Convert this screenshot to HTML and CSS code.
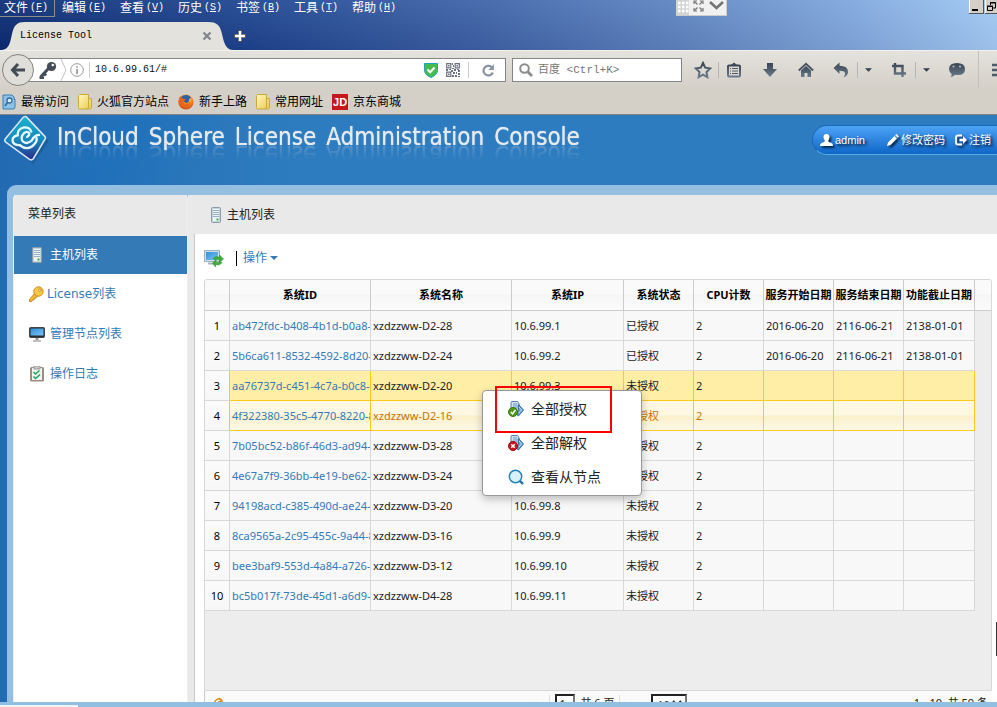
FILE: index.html
```html
<!DOCTYPE html>
<html lang="zh-CN">
<head>
<meta charset="utf-8">
<title>License Tool</title>
<link rel="stylesheet" href="styles.css">
</head>
<body>
<svg class="defs" aria-hidden="true">
  <defs>
    <linearGradient id="g-tool" x1="0" y1="0" x2="0" y2="1"><stop offset="0" stop-color="#3a4652"/><stop offset="1" stop-color="#6a7b8c"/></linearGradient>
    <linearGradient id="g-folder" x1="0" y1="0" x2="1" y2="1"><stop offset="0" stop-color="#fff8c0"/><stop offset="1" stop-color="#eac94a"/></linearGradient>
    <linearGradient id="g-screen" x1="0" y1="0" x2="1" y2="1"><stop offset="0" stop-color="#2f8fd8"/><stop offset="1" stop-color="#7cc4f2"/></linearGradient>
    <linearGradient id="g-logo" x1="0" y1="0" x2="0" y2="1"><stop offset="0" stop-color="#19b4cf"/><stop offset=".55" stop-color="#1686bd"/><stop offset="1" stop-color="#2a2a8c"/></linearGradient>
    <radialGradient id="g-fox" cx=".6" cy=".3" r=".8"><stop offset="0" stop-color="#ffd24a"/><stop offset=".5" stop-color="#f07a1c"/><stop offset="1" stop-color="#c63a10"/></radialGradient>
    <symbol id="folder" viewBox="0 0 14 16"><path d="M1.500.5h9v4h3V13q0 2-2 2H2q-1.500 0-1.500-1.500v-12z" fill="url(#g-folder)" stroke="#c9ab3c"/><path d="M10.500 4.500V13q0 1.500-1.500 2" fill="none" stroke="#c9ab3c"/></symbol>
    <symbol id="server" viewBox="0 0 12 16"><rect x="1.500" y=".5" width="9" height="15" rx="1" fill="#c4d4de" stroke="#8c9ca8"/><rect x="3" y="2" width="6" height="12" fill="#edf4f8"/><path d="M3 3.500h6M3 5.500h6M3 7.500h6M3 9.500h6" stroke="#9ab0c0"/><path d="M6.500 12.500h2" stroke="#3da83d" stroke-width="2"/></symbol>
    <symbol id="cards" viewBox="0 0 16 16"><path d="M3 1.500q0-1 1-1h5q1 0 1.500 1L13 9l-5 5H3z" fill="#cfe0f0" stroke="#5580ad"/><path d="M5 3h4M5 5h5M5 7h5" stroke="#6a93bd"/><path d="M10.500 3.500l5 5.500-5 6-2.500-2 2.500-4z" fill="#5f9bd4" stroke="#3b6fa5"/><path d="M11 6l2.500 3-2.500 3" fill="none" stroke="#c6e2f8"/></symbol>
  </defs>
</svg>

<header class="chrome">
  <div class="titlebar">
    <nav class="menubar" aria-label="菜单栏">
      <button class="menu menu-open">文件<span class="key">(<u>F</u>)</span></button>
      <button class="menu">编辑<span class="key">(<u>E</u>)</span></button>
      <button class="menu">查看<span class="key">(<u>V</u>)</span></button>
      <button class="menu">历史<span class="key">(<u>S</u>)</span></button>
      <button class="menu">书签<span class="key">(<u>B</u>)</span></button>
      <button class="menu">工具<span class="key">(<u>T</u>)</span></button>
      <button class="menu">帮助<span class="key">(<u>H</u>)</span></button>
    </nav>
    <div class="tabs">
      <div class="tab">
        <svg class="tab-shape" viewBox="0 0 234 28" preserveAspectRatio="none" aria-hidden="true"><path d="M0 28C10 28 10 20 12 12C14 3 17 0 25 0H208C217 0 220 3 222 12C224 20 225 28 234 28z" fill="#e4e2dd"/></svg>
        <span class="tab-title">License Tool</span>
        <button class="tab-close" aria-label="关闭"><svg width="10" height="10" viewBox="0 0 10 10"><path d="M1.500 1.500l7 7M8.500 1.500l-7 7" stroke="#7d868c" stroke-width="2.200"/></svg></button>
      </div>
      <button class="new-tab" aria-label="新标签"><svg width="12" height="14" viewBox="1 0 12 14"><path d="M7 1v12M1 7h12" stroke="#555" stroke-width="4"/><path d="M7 2v10M2 7h10" stroke="#fff" stroke-width="2.400"/></svg></button>
    </div>
    <div class="float-tools">
      <svg width="13" height="15" viewBox="0 0 13 15"><rect width="13" height="15" fill="#d4d4d4"/><path d="M2 3h11M2 7h11M2 11h11" stroke="#fff" stroke-width="2.500" stroke-dasharray="2.500 1.500"/></svg>
      <svg width="37" height="15" viewBox="0 0 37 15"><rect width="37" height="15" fill="#f1f1f1"/><path d="M5 4V1h3M11 1h3v3M14 8v3h-3M8 11H5V8M6 2l2.500 2.500M13 2l-2.500 2.500M6 10l2.500-2.500M13 10l-2.500-2.500" fill="none" stroke="#777" stroke-width="1.200"/><path d="M21 2l6.500 6L34 2" fill="none" stroke="#747474" stroke-width="2.600"/></svg>
    </div>
    <div class="win-buttons">
      <button aria-label="最小化"><svg width="13" height="12" viewBox="0 0 13 12"><path d="M3 9h6" stroke="#000" stroke-width="2"/></svg></button>
      <button aria-label="还原"><svg width="13" height="12" viewBox="0 0 13 12"><path d="M5.500 4V1.500h5V7H8M5 2h6M2.500 5.500h5v4h-5zM2 5h6" fill="none" stroke="#000"/></svg></button>
    </div>
  </div>

  <div class="toolbar">
    <button class="back" aria-label="后退"><svg width="16" height="16" viewBox="0 0 16 16"><path d="M15 8H3M8 2L2.500 8 8 14" fill="none" stroke="#444c55" stroke-width="3"/></svg></button>
    <div class="urlbar">
      <svg width="18" height="18" viewBox="0 0 18 18"><circle cx="12.500" cy="5.500" r="4.600" fill="#444c55"/><circle cx="13.800" cy="4" r="1.300" fill="#fff"/><path d="M10 7L2 15.500M5 12.500l2 2M2 15v2h3" fill="none" stroke="#444c55" stroke-width="3"/></svg>
      <svg width="7" height="22" viewBox="0 0 7 22"><path d="M1 0l5 11-5 11" fill="none" stroke="#c4c4c4"/></svg>
      <svg width="14" height="14" viewBox="0 0 14 14"><circle cx="7" cy="7" r="6.300" fill="none" stroke="#999"/><path d="M7 3.200v1.600M7 6v5" stroke="#888" stroke-width="1.500"/></svg>
      <span class="bar"></span>
      <input class="url" type="text" value="10.6.99.61/#" aria-label="地址">
      <svg width="14" height="15" viewBox="0 0 14 15"><path d="M.5.5h13V7q0 5-6.500 7.500Q.5 12 .5 7z" fill="#45bb50" stroke="#23a0b8"/><path d="M3.500 6.500L6.200 9.200 10.500 4.500" fill="none" stroke="#fff" stroke-width="2"/></svg>
      <svg class="qr" width="14" height="14" viewBox="0 0 14 14"><path d="M.7.7h4.100v4.100H.7zM9.200.7h4.100v4.100H9.200zM.7 9.200h4.100v4.100H.7z" fill="none" stroke="#6b7280" stroke-width="1.200"/><path d="M2 2h1.500v1.500H2zM10.500 2H12v1.500h-1.500zM2 10.500h1.500V12H2zM6 0h1v2H6zM7 2h1v2H7zM6 5h2v1H6zM0 6h2v2H0zM3 6h2v1H3zM5 7h2v2H5zM8 6h2v2H8zM11 6h2v1h-2zM12 7h2v2h-2zM7 9h2v2H7zM6 12h2v2H6zM10 9h1v2h-1zM12 10h2v2h-2zM9 12h2v2H9zM12 13h2v1h-2z" fill="#6b7280"/></svg>
      <span class="bar"></span>
      <svg class="reload" width="13" height="13" viewBox="0 0 13 13"><path d="M10.800 8.500A4.800 4.800 0 1 1 9.500 3" fill="none" stroke="#8793a0" stroke-width="2.200"/><path d="M11.800 0v6H6.500z" fill="#8793a0"/></svg>
    </div>
    <div class="search">
      <svg width="14" height="14" viewBox="0 0 14 14"><circle cx="5.500" cy="5.500" r="4.300" fill="none" stroke="#8c8c8c" stroke-width="2"/><path d="M8.500 8.500l4.500 4.500" stroke="#8c8c8c" stroke-width="2.800"/></svg>
      <input type="text" placeholder="百度 &lt;Ctrl+K&gt;" aria-label="搜索">
    </div>
    <div class="tools">
      <button class="tool" aria-label="收藏"><svg width="18" height="18" viewBox="0 0 18 18"><path d="M9 2l2.200 4.700 5 .7-3.700 3.600.9 5.200L9 13.700l-4.400 2.500.9-5.200L1.800 7.400l5-.7z" fill="none" stroke="url(#g-tool)" stroke-width="2"/></svg></button>
      <span class="bar"></span>
      <button class="tool list" aria-label="书签列表"><svg width="16" height="16" viewBox="0 0 16 16"><path d="M5 3L8 .5 11 3z" fill="#3f4b57"/><rect x="2" y="3.500" width="12" height="11" rx="1" fill="none" stroke="url(#g-tool)" stroke-width="2"/><path d="M4 6.500h1M6 6.500h6M4 9h1M6 9h6M4 11.500h1M6 11.500h6" stroke="#4d5a67"/></svg></button>
      <button class="tool wide" aria-label="下载"><svg width="16" height="16" viewBox="0 0 16 16"><path d="M5 1h6v6h4l-7 8-7-8h4z" fill="url(#g-tool)"/></svg></button>
      <button class="tool wide" aria-label="主页"><svg width="16" height="16" viewBox="0 0 16 16"><path d="M.8 8.500L8 1.800l7.200 6.700" fill="none" stroke="#46525f" stroke-width="1.800"/><path d="M3 8.500L8 4l5 4.500V15H9.500v-4h-3v4H3z" fill="url(#g-tool)"/></svg></button>
      <button class="tool split" aria-label="撤销"><svg width="16" height="16" viewBox="0 0 16 16"><path d="M6.500.5v3.300Q15 3.800 15 10q0 3.500-4.500 5.500 2-2.500 1.500-4.500-.5-2.300-5.500-2.300V12L.5 6z" fill="url(#g-tool)"/></svg></button>
      <span class="bar"></span>
      <button class="caret" aria-label="撤销选项"><svg width="7" height="4" viewBox="0 0 8 4"><path d="M0 0h8L4 4z" fill="#333f4a"/></svg></button>
      <button class="tool split crop" aria-label="截图"><svg width="16" height="16" viewBox="0 0 16 16"><path d="M4 1v10.500h11M1 4h10.500v11" fill="none" stroke="url(#g-tool)" stroke-width="2.400"/></svg></button>
      <span class="bar"></span>
      <button class="caret" aria-label="截图选项"><svg width="7" height="4" viewBox="0 0 8 4"><path d="M0 0h8L4 4z" fill="#333f4a"/></svg></button>
      <button class="tool chat" aria-label="聊天"><svg width="18" height="16" viewBox="0 0 18 16"><path d="M9 1q8 0 8 6t-7 6q-1 0-3-.3Q5 15 2.500 15 4 13.500 3.500 11.800 1 10 1 7q0-6 8-6z" fill="url(#g-tool)"/><circle cx="5.500" cy="4.500" r="1" fill="#b8c0c8"/><circle cx="12" cy="4.500" r="1" fill="#b8c0c8"/></svg></button>
      <span class="bar tall"></span>
      <button class="burger" aria-label="菜单"><svg width="16" height="16" viewBox="0 0 16 16"><path d="M1 3h14M1 8h14M1 13h14" stroke="#4d5a67" stroke-width="2.600"/></svg></button>
    </div>
  </div>

  <nav class="bookmarks" aria-label="书签">
    <a href="#"><svg width="14" height="16" viewBox="0 0 14 16"><path d="M1 1h9l2 2v2h1v8q0 2-2 2H1z" fill="#8cc3ea" stroke="#3a7fb5"/><circle cx="7.500" cy="6.500" r="2.500" fill="#d9eefb" stroke="#3c6c95" stroke-width="1.300"/><path d="M5.500 8.500L3 12" stroke="#3c6c95" stroke-width="1.800"/></svg>最常访问</a>
    <a href="#"><svg width="14" height="16"><use href="#folder"/></svg>火狐官方站点</a>
    <a href="#"><svg width="16" height="16" viewBox="0 0 16 16"><circle cx="8" cy="8" r="7.600" fill="url(#g-fox)"/><path d="M3 4Q5 .5 9 1q3 .5 4 3-2 0-2 2 0 3-3 3-3-1-5-5z" fill="#2d62a8"/><path d="M.5 7Q1 3 2.500 2q0 2 2 2.500 1 .5 3 .5-.5 2-2.500 2.500Q5.500 10 8.500 10q2.500-.3 3-2 .5 4-3.500 5.500Q2 14 .5 7z" fill="#e8651a"/></svg>新手上路</a>
    <a href="#"><svg width="14" height="16"><use href="#folder"/></svg>常用网址</a>
    <a href="#"><span class="jd">JD</span>京东商城</a>
  </nav>
</header>

<div class="app">
  <header class="banner">
    <svg class="logo" width="48" height="50" viewBox="1 0 46 48">
      <path d="M27 4l20 21-15 22L9 28z" fill="#123f7c" opacity=".35"/>
      <path d="M22.500 2Q24.500.8 26 2.500l17 18q1.200 1.500 0 3L32 42q-1.600 2-4 .3L5.500 26Q4 24.800 5 23z" fill="url(#g-logo)" stroke="#d6e6f2" stroke-width="1.500"/>
      <path d="M19 29q-7 0-7-5 .5-4 5-4.500-.5-6 5.500-7.500 6-.5 7.500 4" fill="none" stroke="#e9faff" stroke-width="2.200" stroke-linecap="round"/>
      <path d="M26 21q2.500-1.500 2-3.500-2-2.500-5 0-3.500 3.500-1.500 7.500 4 4 9-.5 2-5 7-5.500M19 29q8 6 14-1 3-3 2-6" fill="none" stroke="#e9faff" stroke-width="2.200" stroke-linecap="round"/>
    </svg>
    <h1 class="brand"><span>InCloud</span> <span>Sphere</span> <span>License</span> <span>Administration</span> <span>Console</span></h1>
    <div class="account">
      <a href="#" class="who"><svg width="13" height="12" viewBox="0 0 13 12"><path d="M6.500 0q3 0 3 3.200Q9.300 5.500 8 7q.2 1 3.500 2 1.500.7 1.500 3H0q0-2.300 1.500-3Q4.800 8 5 7 3.700 5.500 3.500 3.200 3.500 0 6.500 0z" fill="#fff"/></svg>admin</a>
      <a href="#" class="pwd"><svg width="12" height="12" viewBox="0 0 12 12"><path d="M0 12l1-3.500L7.500 2 10 4.500 3.500 11zM8.200 1.300L9.500 0 12 2.500l-1.300 1.300z" fill="#fff"/></svg>修改密码</a>
      <a href="#" class="out"><svg width="12" height="12" viewBox="0 0 12 12"><path d="M7 1.500H3Q1 1.500 1 3.500v5q0 2 2 2h4" fill="none" stroke="#fff" stroke-width="1.800"/><path d="M4.500 4.800H8V2l4 4-4 4V7.200H4.500z" fill="#fff"/></svg>注销</a>
    </div>
  </header>

  <div class="frame">
    <aside class="sidebar">
      <h2 class="side-title">菜单列表</h2>
      <nav class="side-nav">
        <a href="#" class="active"><svg width="16" height="16"><use href="#server"/></svg>主机列表</a>
        <a href="#" class="license"><svg width="16" height="16" viewBox="0 0 16 16"><path d="M7 7l-5.500 6.500V15.500h2l1-1.500h1.500v-1.800h1.800L10 9.500" fill="#f5b82e" stroke="#c88a1c"/><circle cx="10.500" cy="5.500" r="4.700" fill="#f9c845" stroke="#c88a1c"/><circle cx="11.800" cy="4.200" r="1.200" fill="#fff" stroke="#c88a1c"/></svg>License列表</a>
        <a href="#"><svg width="16" height="16" viewBox="0 0 16 16"><rect x=".5" y="1.500" width="15" height="10" rx="1" fill="#222e38" stroke="#444"/><path d="M1.500 2.500h13v7h-13z" fill="url(#g-screen)"/><path d="M6.500 12h3v2h-3z" fill="#999"/><path d="M4 15h8" stroke="#aaa" stroke-width="1.500"/></svg>管理节点列表</a>
        <a href="#"><svg width="16" height="16" viewBox="0 0 16 16"><rect x="1" y="1" width="14" height="14.500" rx="1.500" fill="#a08c7c"/><rect x="3" y="2" width="10" height="12" fill="#eef3f3"/><path d="M5 0h6v3H5z" fill="#ccc" stroke="#999"/><path d="M4.500 6l2 2 4-3.500M4.500 10.500l2 2 4.500-4" fill="none" stroke="#23a55a" stroke-width="1.600"/></svg>操作日志</a>
      </nav>
    </aside>

    <main class="main">
      <h2 class="main-title"><svg width="12" height="16"><use href="#server"/></svg>主机列表</h2>
      <div class="panel">
        <div class="actions">
          <button class="refresh" aria-label="刷新"><svg width="20" height="18" viewBox="0 0 20 18"><rect x=".5" y="1.500" width="15" height="11" fill="#cfe0ea" stroke="#9ab0bc"/><rect x="2" y="3" width="12" height="8" fill="url(#g-screen)"/><path d="M4 14.500h8" stroke="#a8b4bc" stroke-width="2"/><path d="M9 9.500q3-3.500 6.500-1V6l4 4-4 3.500V11q-2.500-1.500-4 .5zM18 13.500q-2 3.500-6.500 2V18l-3-4 3.500-3v2.200q2.500 1 3.500-.5z" fill="#3fae3a" stroke="#258a25" stroke-width=".5"/></svg></button>
          <span class="divider"></span>
          <button class="ops">操作<svg width="8" height="4" viewBox="0 0 8 4"><path d="M0 0h8L4 4z" fill="#337ab7"/></svg></button>
        </div>

        <div class="grid">
          <table>
            <colgroup><col class="c-num"><col class="c-id"><col class="c-name"><col class="c-ip"><col class="c-s"><col class="c-s"><col class="c-s"><col class="c-s"><col class="c-last"><col></colgroup>
            <thead><tr><th></th><th>系统ID</th><th>系统名称</th><th>系统IP</th><th>系统状态</th><th>CPU计数</th><th>服务开始日期</th><th>服务结束日期</th><th>功能截止日期</th><td></td></tr></thead>
            <tbody>
              <tr><th>1</th><td><a href="#">ab472fdc-b408-4b1d-b0a8-f</a></td><td>xzdzzww-D2-28</td><td>10.6.99.1</td><td>已授权</td><td>2</td><td>2016-06-20</td><td>2116-06-21</td><td>2138-01-01</td></tr>
              <tr><th>2</th><td><a href="#">5b6ca611-8532-4592-8d20-7</a></td><td>xzdzzww-D2-24</td><td>10.6.99.2</td><td>已授权</td><td>2</td><td>2016-06-20</td><td>2116-06-21</td><td>2138-01-01</td></tr>
              <tr class="hover"><th>3</th><td><a href="#">aa76737d-c451-4c7a-b0c8-3</a></td><td>xzdzzww-D2-20</td><td>10.6.99.3</td><td>未授权</td><td>2</td><td></td><td></td><td></td></tr>
              <tr class="picked"><th>4</th><td><a href="#">4f322380-35c5-4770-8220-8</a></td><td>xzdzzww-D2-16</td><td></td><td>未授权</td><td>2</td><td></td><td></td><td></td></tr>
              <tr><th>5</th><td><a href="#">7b05bc52-b86f-46d3-ad94-5</a></td><td>xzdzzww-D3-28</td><td></td><td>未授权</td><td>2</td><td></td><td></td><td></td></tr>
              <tr><th>6</th><td><a href="#">4e67a7f9-36bb-4e19-be62-7</a></td><td>xzdzzww-D3-24</td><td></td><td>未授权</td><td>2</td><td></td><td></td><td></td></tr>
              <tr><th>7</th><td><a href="#">94198acd-c385-490d-ae24-c</a></td><td>xzdzzww-D3-20</td><td>10.6.99.8</td><td>未授权</td><td>2</td><td></td><td></td><td></td></tr>
              <tr><th>8</th><td><a href="#">8ca9565a-2c95-455c-9a44-8</a></td><td>xzdzzww-D3-16</td><td>10.6.99.9</td><td>未授权</td><td>2</td><td></td><td></td><td></td></tr>
              <tr><th>9</th><td><a href="#">bee3baf9-553d-4a84-a726-5</a></td><td>xzdzzww-D3-12</td><td>10.6.99.10</td><td>未授权</td><td>2</td><td></td><td></td><td></td></tr>
              <tr><th>10</th><td><a href="#">bc5b017f-73de-45d1-a6d9-7</a></td><td>xzdzzww-D4-28</td><td>10.6.99.11</td><td>未授权</td><td>2</td><td></td><td></td><td></td></tr>
            </tbody>
          </table>
        </div>
        <footer class="pager">
          <svg width="12" height="12" viewBox="0 0 12 12"><path d="M2 7a4 4 0 0 1 7-3.500M10 6a4 4 0 0 1-7 3.500M6 1l3 3-4 1" fill="none" stroke="#e08a1e" stroke-width="1.500"/></svg>
          <div class="pages">
            <span class="arrows">◂ ◂◂</span>
            <span class="bar"></span>
            <input type="text" value="1" aria-label="页码">
            <span>共 6 页</span>
            <span class="bar"></span>
            <span class="arrows">▸▸ ▸</span>
            <select aria-label="每页条数"><option>10</option></select>
          </div>
          <span>1 - 10&nbsp;&nbsp;共 59 条</span>
        </footer>
      </div>
    </main>
  </div>
</div>

<div class="context" role="menu">
  <button role="menuitem"><svg width="16" height="16" viewBox="0 0 16 16"><use href="#cards"/><circle cx="5" cy="11" r="4.500" fill="#4f9a16" stroke="#3a7410"/><path d="M2.800 11l1.700 1.800L7.500 9" fill="none" stroke="#fff" stroke-width="1.500"/></svg>全部授权</button>
  <button role="menuitem"><svg width="16" height="16" viewBox="0 0 16 16"><use href="#cards"/><circle cx="5" cy="11" r="4.500" fill="#cf1420" stroke="#9c0c14"/><path d="M3.200 9.200l3.600 3.600M6.800 9.200l-3.600 3.600" stroke="#fff" stroke-width="1.500"/></svg>全部解权</button>
  <button role="menuitem"><svg width="16" height="16" viewBox="0 0 16 16"><circle cx="7.500" cy="7.500" r="6.200" fill="#d9f0f8" stroke="#2585b8" stroke-width="1.500"/><path d="M12 12l3 3" stroke="#1d6fa3" stroke-width="2.400"/></svg>查看从节点</button>
</div>
<div class="marker"></div>
<div class="edge-thumb"></div>
<div class="status-tip"></div>
</body>
</html>
```

FILE: styles.css
```css
* { box-sizing: border-box; }

body {
  margin: 0;
  height: 100vh;
  display: flex;
  flex-direction: column;
  position: relative;
  overflow: hidden;
  font: 12px/16px "Noto Sans", "Noto Sans CJK SC", sans-serif;
  color: #222;
  background: #91bfe2;
}

button, input, select { font: inherit; color: inherit; }
button { background: none; border: 0; padding: 0; }
button, a { cursor: pointer; }
a { color: #337ab7; text-decoration: none; }
svg { flex: none; display: block; }
h1, h2 { margin: 0; font-weight: normal; }
.defs { position: absolute; width: 0; height: 0; }

/* browser chrome */
.chrome { flex: none; font-family: "Liberation Sans", "Noto Sans CJK SC", sans-serif; border-bottom: 1px solid #858480; }

.titlebar {
  position: relative;
  height: 50px;
  background:
    linear-gradient(rgba(150, 190, 240, .12), rgba(0, 10, 70, .08)),
    linear-gradient(97deg, #0c2a70 0%, #1f438c 25%, #3f62a4 48%, #6286c0 68%, #85aadd 85%, #a9cff6 100%);
}
.menubar { display: flex; height: 17px; }
.menu {
  width: 58px;
  height: 17px;
  display: flex;
  align-items: center;
  padding: 0 0 2px 4px;
  color: #fff;
}
.menu-open { width: 55px; margin-right: 3px; border: solid #8d8c88; border-width: 0 1px 1px 0; padding-bottom: 1px; }
.key { font: 10px/14px "Liberation Mono", monospace; margin-left: 2px; }

.tabs { display: flex; align-items: center; height: 28px; margin-top: 5px; }
.tab { position: relative; width: 234px; height: 28px; display: flex; align-items: center; justify-content: space-between; padding: 0 21px 0 20px; }
.tab-shape { position: absolute; inset: 0; width: 100%; height: 100%; }
.tab-title { position: relative; font: 10px/16px "Liberation Mono", monospace; color: #000; }
.tab-close { position: relative; padding: 1px; }
.new-tab { display: block; }

.float-tools { position: absolute; top: 0; left: 676px; display: flex; border: solid #ccc; border-width: 0 1px 1px 0; }
.win-buttons { position: absolute; top: 0; left: 969px; display: flex; gap: 1px; }
.win-buttons button { width: 15px; height: 14px; background: #d4d0c8; border: solid #555; border-width: 0 1px 1px 0; box-shadow: inset 1px 0 #fff; }

.toolbar {
  display: flex;
  align-items: center;
  height: 39px;
  border-top: 1px solid #f2f1ee;
  background: linear-gradient(#e4e2dd, #d4d0c8);
  overflow: hidden;
}
.back {
  position: relative;
  flex: none;
  width: 32px;
  height: 32px;
  margin-left: 2px;
  display: grid;
  place-items: center;
  border: 1px solid #85837f;
  border-radius: 50%;
  background: #e0ded9;
}
.urlbar {
  flex: 1;
  display: flex;
  align-items: center;
  gap: 3px;
  height: 24px;
  margin-left: -8px;
  padding: 0 10px 0 12px;
  border: 1px solid #858585;
  background: #fff;
}
.bar { flex: none; width: 1px; height: 16px; background: #b5b5b5; }
.urlbar .bar { margin: 0 2px; background: #ccc; }
.urlbar .reload { margin-left: 8px; }
.urlbar .qr { margin: 0 3px 0 5px; }
.url {
  flex: 1;
  min-width: 0;
  border: 0;
  padding: 0;
  outline: 0;
  font: 10px/16px "Liberation Mono", monospace;
  color: #111;
}
.search {
  flex: none;
  width: 170px;
  height: 24px;
  margin-left: 6px;
  padding: 0 6px;
  display: flex;
  align-items: center;
  gap: 5px;
  border: 1px solid #858585;
  background: #fff;
}
.search input { flex: 1; min-width: 0; border: 0; padding: 0; outline: 0; font: 11px/16px "Liberation Mono", "Noto Sans CJK SC", monospace; }
.search input::placeholder { color: #777; opacity: 1; }
.tools { flex: none; width: 315px; display: flex; align-items: center; padding-left: 6px; overflow: hidden; }
.tool { flex: none; width: 30px; display: grid; place-items: center; }
.tool.list { margin-right: 3px; }
.tool.wide { width: 36px; }
.tool.split { width: 33px; }
.tool.crop { margin-left: 4px; }
.tool.chat { width: 42px; }
.caret { flex: none; width: 20px; display: grid; place-items: center; }
.bar.tall { height: 38px; background: #c4c1ba; }
.burger { flex: none; margin-left: 12px; }

.bookmarks { display: flex; align-items: center; gap: 9px; height: 25px; padding-left: 2px; background: #d4d0c8; }
.bookmarks a { display: flex; align-items: center; gap: 5px; color: #000; }
.jd { width: 16px; height: 16px; background: #c8161d; color: #fff; font: bold 11px/16px "Liberation Sans", sans-serif; text-align: center; }

/* application */
.app {
  flex: 1;
  min-height: 0;
  display: flex;
  flex-direction: column;
  padding: 0 0 5px;
  background:
    linear-gradient(#91bfe2, #91bfe2) bottom / 100% 5px no-repeat,
    linear-gradient(125deg, transparent 60px, rgba(0, 110, 200, .2) 110px, transparent 190px) top left / 330px 70px no-repeat,
    linear-gradient(90deg, #226bb2, #2e7cc0 300px);
}
.banner { flex: none; display: flex; align-items: flex-start; height: 70px; }
.logo { margin: 0 8px 0 1px; }
.brand {
  display: flex;
  gap: 10px;
  padding-top: 8px;
  font: 24px/28px "DejaVu Sans Condensed", "DejaVu Sans", sans-serif;
  color: #e6ebef;
  text-shadow: 0 0 1px #dde6ee;
  white-space: nowrap;
  -webkit-box-reflect: below -11px linear-gradient(transparent 45%, rgba(255, 255, 255, .3));
}
.account {
  width: 185px;
  height: 30px;
  margin: 10px 0 0 auto;
  display: flex;
  align-items: center;
  padding-left: 7px;
  border: solid #1d67b8;
  border-width: 1px 0 1px 1px;
  border-bottom-color: #58aede;
  border-radius: 15px 0 0 15px;
  background: linear-gradient(#4da3f5, #0e67c8);
  font-size: 11px;
}
.account a { display: flex; align-items: center; gap: 2px; color: #fff; text-shadow: 2px 2px 3px #001; white-space: nowrap; }
.account svg { filter: drop-shadow(2px 2px 1px rgba(0, 0, 20, .7)); }
.account .who { font-family: "Liberation Sans", sans-serif; }
.account .pwd { margin-left: 22px; }
.account .out { margin-left: 10px; }

.frame {
  flex: 1;
  min-height: 0;
  margin-left: 7px;
  padding: 10px 0 0 6px;
  display: flex;
  border-radius: 9px 0 0 0;
  background: #94bfe1;
}
.sidebar { flex: none; width: 175px; background: #fff; border: solid #eee; border-width: 0 1px; border-radius: 4px 4px 0 0; }
.side-title { height: 41px; padding: 11px 14px; font-size: 12px; line-height: 16px; background: #e9e9e9; }
.side-nav a { height: 40px; display: flex; align-items: center; gap: 5px; padding-left: 15px; font-family: "DejaVu Sans", "Noto Sans CJK SC", sans-serif; }
.side-nav .license { gap: 3px; padding-left: 14px; }
.side-nav .active { height: 38px; background: #337ab7; color: #fff; }

.main { flex: 1; min-width: 0; display: flex; flex-direction: column; border-left: 6px solid #e9e9e9; background: #fff; }
.main-title { display: flex; align-items: center; gap: 5px; height: 39px; padding-left: 16px; font-size: 12px; line-height: 16px; background: #e9e9e9; }
.panel { flex: 1; min-height: 0; display: flex; flex-direction: column; padding: 0 5px 0 9px; border-left: 1px solid #c9c9c9; overflow: hidden; }
.actions { flex: none; display: flex; align-items: center; height: 45px; padding-top: 3px; }
.divider { width: 1px; height: 15px; margin: 0 6px 0 12px; background: #000; }
.ops { display: flex; align-items: center; gap: 3px; color: #337ab7; }

.grid { flex: none; height: 412px; border: 1px solid #d8d8d8; border-radius: 3px 3px 0 0; background: #ededed; overflow: hidden; }
table { width: 100%; table-layout: fixed; border-collapse: separate; border-spacing: 0; font-size: 11px; line-height: 16px; }
.c-num { width: 25px; }
.c-id, .c-name { width: 141px; }
.c-ip { width: 112px; }
.c-s { width: 70px; }
.c-last { width: 71px; }
th, td { height: 30px; padding: 0 2px; border: solid #d8d8d8; border-width: 0 1px 1px 0; white-space: nowrap; overflow: hidden; text-align: left; font-weight: normal; }
thead th, thead td { height: 31px; padding: 0; text-align: center; font-weight: bold; color: #000; background: linear-gradient(#fafafa 45%, #f6f6f6 50%, #fbfbfb); border-color: #ccc; }
thead td { border-right: 0; }
tbody td { background: #f8f8f8; }
tbody th { padding: 0; text-align: center; color: #000; background: linear-gradient(#fbfbfb, #f7f7f7); }
.hover td { background: #ffefa6; border-color: #f9cb1c; }
.hover th:first-child, .picked th:first-child { border-right-color: #f9cb1c; }
.picked td { background: linear-gradient(#fef8e2 48%, #fbf0cb 52%, #fef9e8); border-color: #f9cb1c; color: #c77405; }

.pager { flex: none; display: flex; align-items: center; justify-content: space-between; height: 24px; padding: 0 4px 0 8px; font-size: 11px; background: #fafafa; border: solid #ccc; border-width: 0 0 0 1px; }
.pages { display: flex; align-items: center; gap: 5px; margin-left: 72px; }
.pages input { width: 20px; height: 18px; padding: 0 2px; border: 2px inset #777; background: #fff; }
.pages select { width: 36px; height: 18px; padding: 0; border: 2px inset #777; border-radius: 0; background: #fff; }
.pages .bar { background: #ddd; }
.arrows { color: #d9cdb8; }

/* overlays */
.context {
  position: absolute;
  left: 482px;
  top: 390px;
  width: 160px;
  padding: 1px 0;
  border: 1px solid #999;
  border-radius: 4px;
  background: #fff;
  box-shadow: 0 3px 9px rgba(0, 0, 0, .25);
}
.context button { width: 100%; height: 34px; display: flex; align-items: center; gap: 7px; padding-left: 25px; font-size: 14px; line-height: 20px; }
.marker { position: absolute; left: 495px; top: 386px; width: 117px; height: 47px; border: 2px solid #f00; pointer-events: none; }
.edge-thumb { position: absolute; right: 0; top: 622px; width: 1px; height: 34px; background: #333; }
.status-tip { position: absolute; left: 0; bottom: 0; width: 78px; height: 2px; background: #eef4f8; }
```
